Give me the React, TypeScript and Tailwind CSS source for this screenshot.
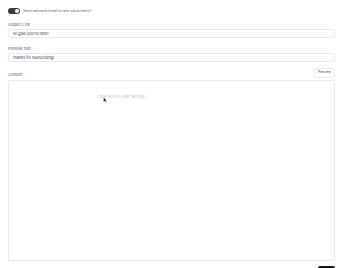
export default function App() {
  return (
    <div className="relative h-[268px] w-[348px] overflow-hidden bg-white font-['Inter',sans-serif] text-[#18181b]">
      <div className="flex w-[335px] flex-col pl-2 pt-[8px]">
        <div className="flex items-center gap-[3px]">
          <div className="flex h-[6px] w-[12px] items-center justify-end rounded-full bg-[#3a3a3f] px-[1px]">
            <div className="h-[4px] w-[4px] rounded-full bg-white" />
          </div>
          <span className="text-[3.5px] leading-[6px] text-[#5c5c64]">Send welcome email to new subscribers?</span>
        </div>

        <div className="mt-[8px] text-[3.8px] leading-[5px] text-[#5c5c64]">Subject Line</div>
        <div className="mt-[2px] flex h-[9px] items-center rounded-[2px] border border-[#e9e9eb] px-[4px] text-[3.8px] text-[#3f3f46]">
          so glad you're here!
        </div>

        <div className="mt-[8px] text-[3.8px] leading-[5px] text-[#5c5c64]">Preview Text</div>
        <div className="mt-[2px] flex h-[9px] items-center rounded-[2px] border border-[#e9e9eb] px-[4px] text-[3.8px] text-[#3f3f46]">
          thanks for subscribing!
        </div>

        <div className="mt-[6px] flex items-end justify-between">
          <span className="mb-[1px] text-[3.8px] leading-[5px] text-[#5c5c64]">Content</span>
          <div className="flex h-[10px] items-center rounded-[2px] border border-[#e9e9eb] px-[3px] text-[3.5px] text-[#3f3f46]">
            Preview
          </div>
        </div>

        <div className="relative mt-[2px] h-[181px] rounded-[2px] border border-[#e9e9eb] pl-[88px] pt-[13px] text-[4px] leading-[5px]">
          <span className="text-[#bdbdc1]">Click here to start writing...</span>
          <svg className="absolute left-[94px] top-[16px]" width="4" height="6" viewBox="0 0 8 12">
            <path d="M1 1 L1 10 L3.5 7.8 L5 11 L6.5 10.3 L5 7.2 L7.8 7 Z" fill="#111" stroke="#fff" strokeWidth="0.8" />
          </svg>
        </div>

        <div className="mt-[5px] flex justify-end">
          <div className="h-[8px] w-[17px] rounded-[2px] bg-[#18181b]" />
        </div>
      </div>
    </div>
  );
}
